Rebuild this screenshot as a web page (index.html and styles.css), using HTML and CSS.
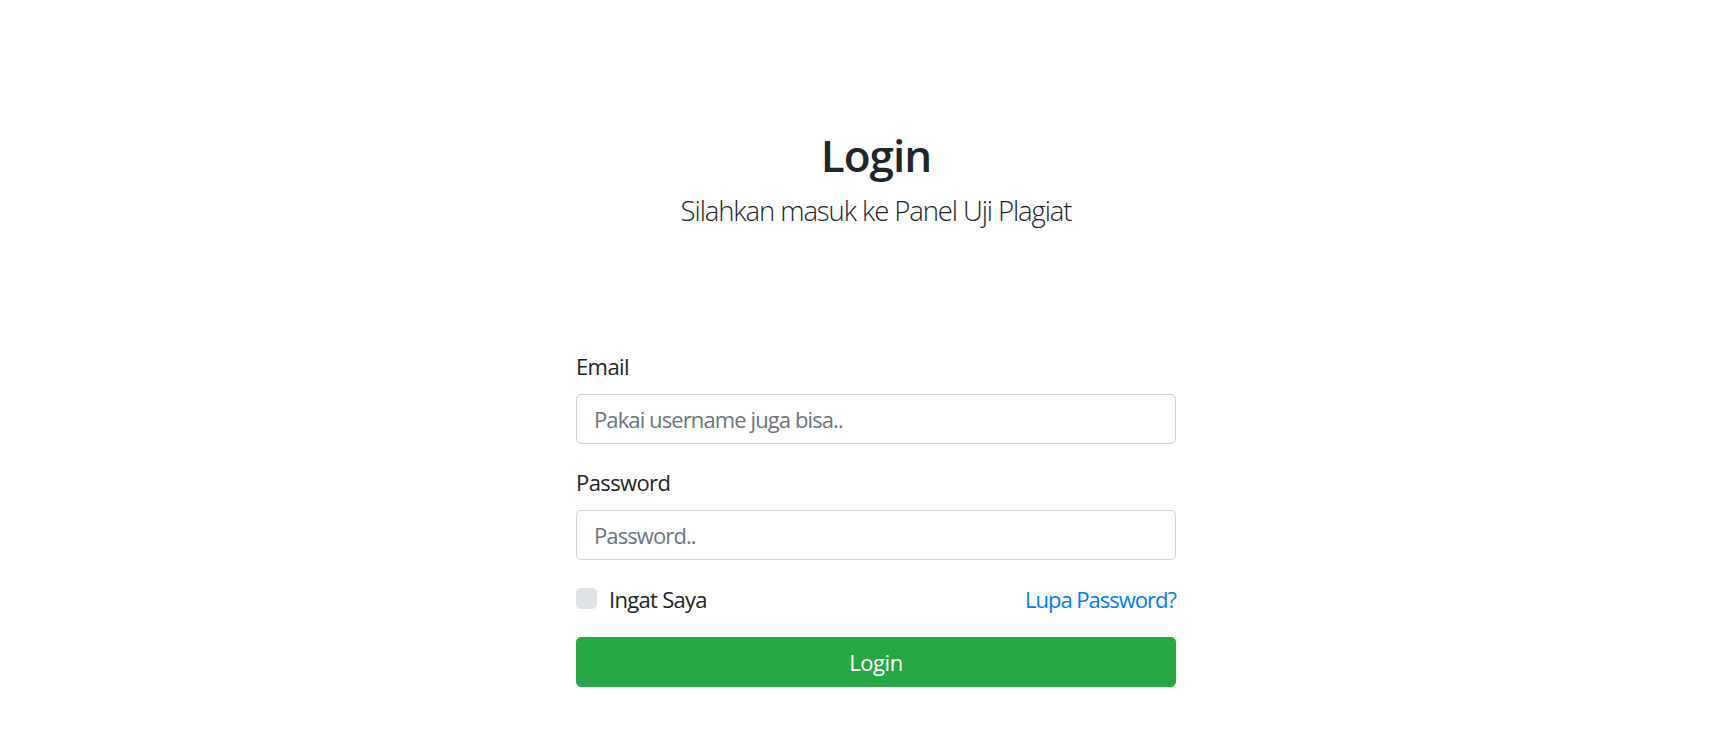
FILE: index.html
```html
<!DOCTYPE html>
<html lang="id">
<head>
<meta charset="utf-8">
<title>Login</title>
<link rel="stylesheet" href="styles.css">
</head>
<body>
<main class="page">
  <header class="hero">
    <h1 class="title">Login</h1>
    <p class="lead">Silahkan masuk ke Panel Uji Plagiat</p>
  </header>
  <form class="login">
    <div class="group">
      <label class="label" for="email">Email</label>
      <input class="field" id="email" type="text" placeholder="Pakai username juga bisa..">
    </div>
    <div class="group">
      <label class="label" for="password">Password</label>
      <input class="field" id="password" type="password" placeholder="Password..">
    </div>
    <div class="row">
      <label class="check">
        <input class="box" type="checkbox">
        <span>Ingat Saya</span>
      </label>
      <a class="link" href="#">Lupa Password?</a>
    </div>
    <button class="btn" type="button">Login</button>
  </form>
</main>
</body>
</html>
```

FILE: styles.css
```css
* { box-sizing: border-box; }
html, body {
  margin: 0;
  padding: 0;
  background: #fff;
}
body {
  font-family: "Open Sans", "Noto Sans", sans-serif;
  font-size: 22px;
  line-height: 33px;
  color: #212529;
}
.page {
  display: flex;
  flex-direction: column;
  align-items: center;
  padding-left: 27px;
  padding-top: 129px;
}
.hero {
  display: flex;
  flex-direction: column;
  align-items: center;
}
.title {
  margin: 0;
  font-size: 44px;
  line-height: 52px;
  font-weight: 600;
  letter-spacing: -1px;
}
.lead {
  margin: 9px 0 0;
  font-size: 27.5px;
  line-height: 41px;
  font-weight: 300;
  letter-spacing: -1.1px;
}
.login {
  width: 600px;
  margin-top: 119px;
  display: flex;
  flex-direction: column;
}
.group {
  display: flex;
  flex-direction: column;
  margin-bottom: 22px;
}
.label {
  margin-bottom: 11px;
  letter-spacing: -0.6px;
}
.field {
  height: 50px;
  width: 100%;
  padding: 0 17px;
  font-family: inherit;
  font-size: 22px;
  color: #495057;
  border: 1px solid #ced4da;
  border-radius: 5px;
  background: #fff;
  outline: none;
  letter-spacing: -0.9px;
}
.field::placeholder {
  color: #6c757d;
  opacity: 1;
}
.row {
  display: flex;
  justify-content: space-between;
  align-items: flex-start;
  margin-top: 1px;
}
.check {
  display: flex;
  align-items: flex-start;
  gap: 12px;
  letter-spacing: -0.7px;
}
.box {
  appearance: none;
  -webkit-appearance: none;
  margin: 5px 0 0;
  width: 21px;
  height: 21px;
  border-radius: 5px;
  background: #dee2e6;
  border: none;
}
.link {
  color: #007bff;
  text-decoration: none;
  letter-spacing: -1px;
}
.btn {
  margin-top: 21px;
  height: 50px;
  width: 100%;
  border: 1px solid #28a745;
  border-radius: 5px;
  background: #28a745;
  color: #fff;
  font-family: inherit;
  font-size: 22px;
  letter-spacing: -0.4px;
  cursor: pointer;
}
```
